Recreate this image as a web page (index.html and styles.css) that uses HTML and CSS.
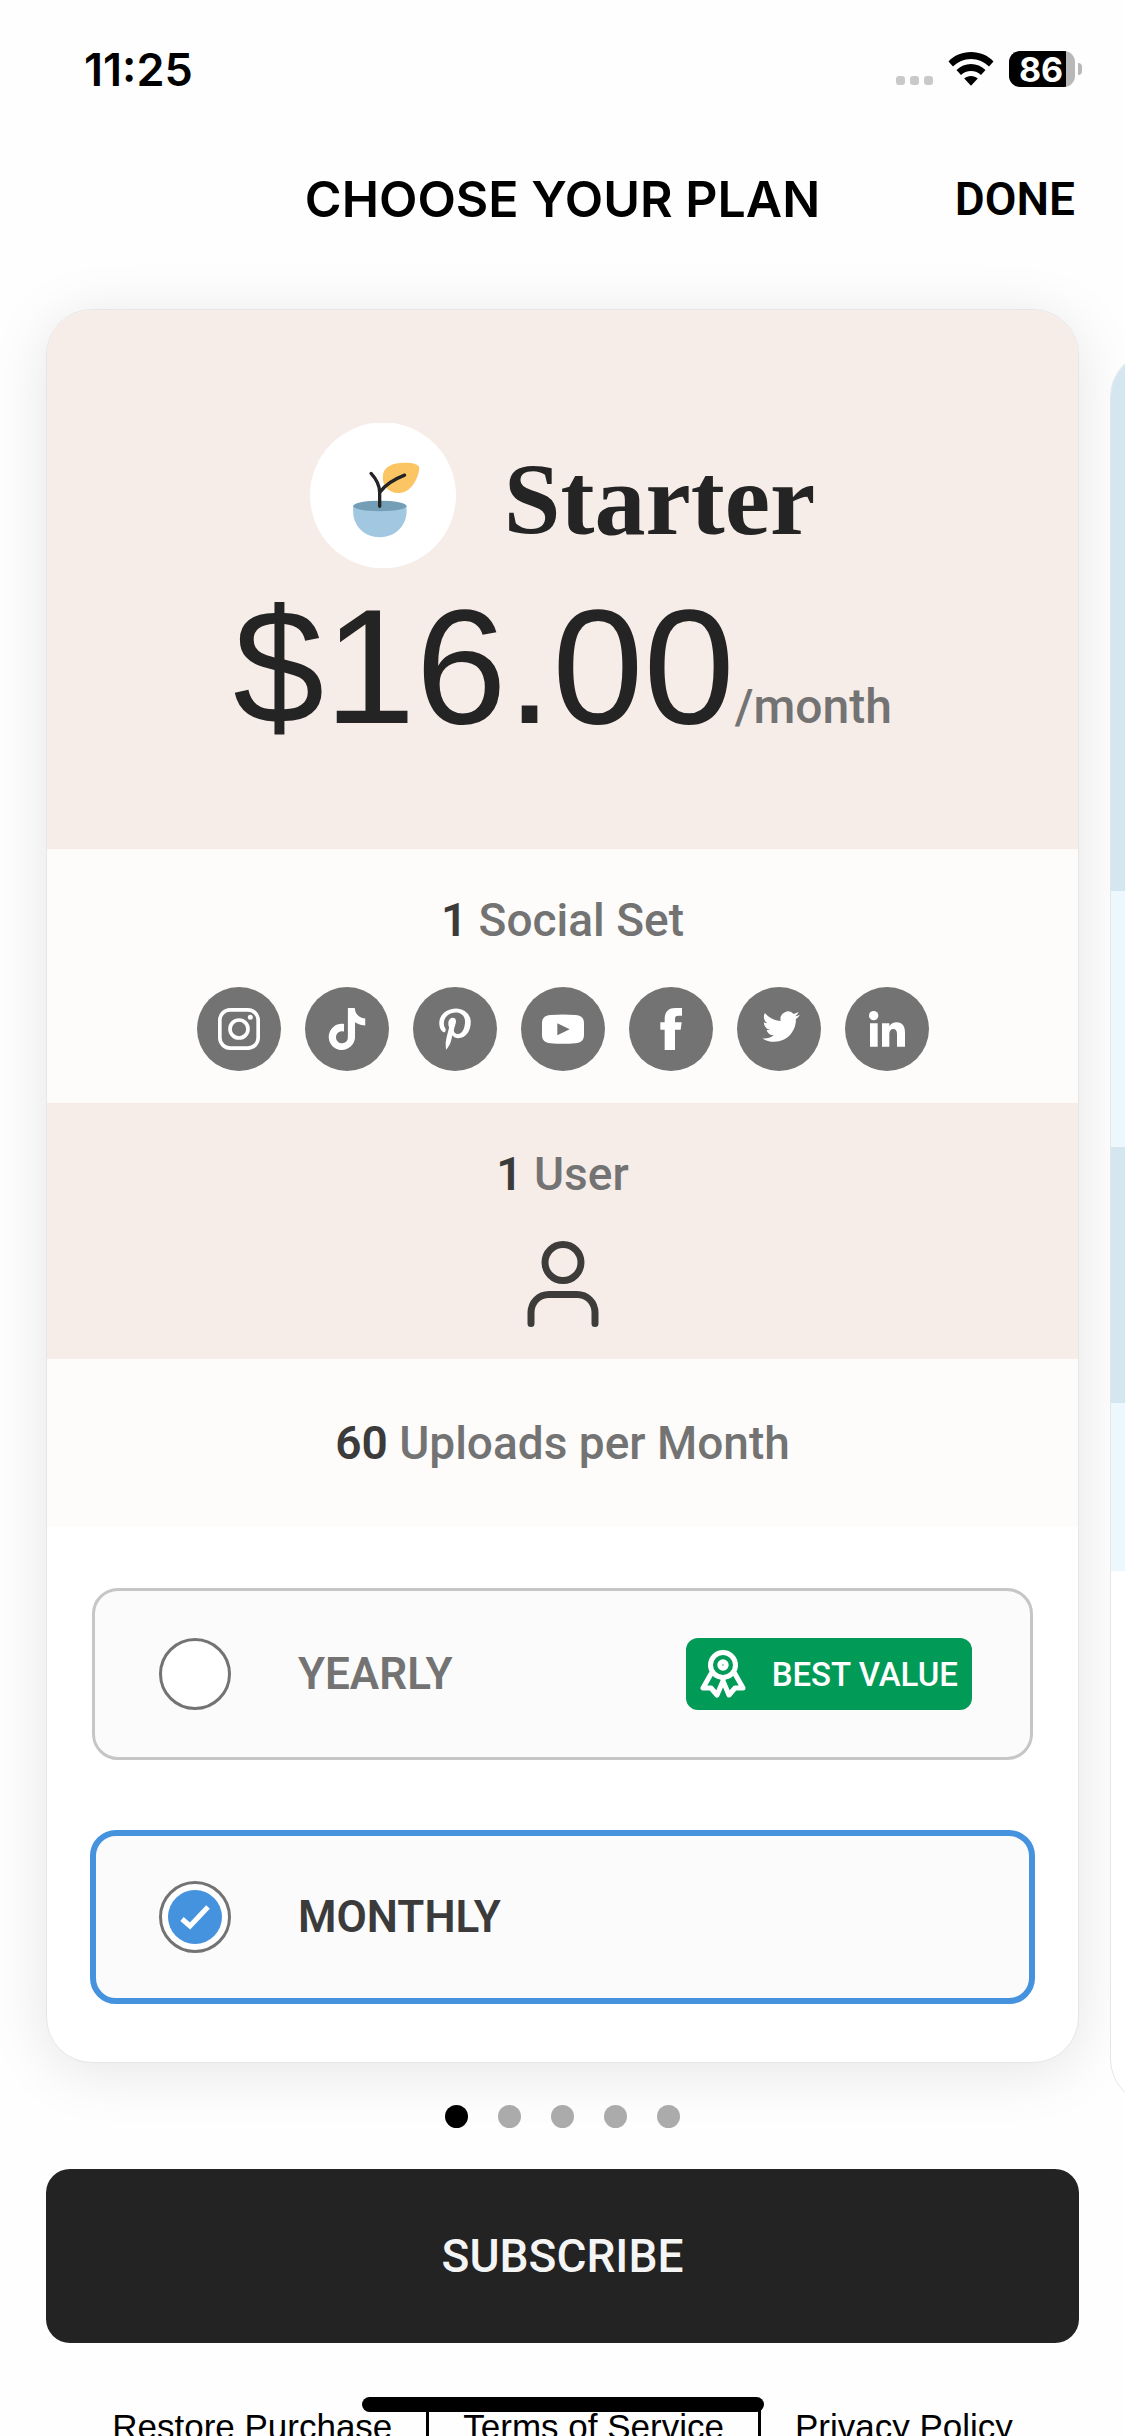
FILE: index.html
```html
<!DOCTYPE html>
<html lang="en">
<head>
  <meta charset="UTF-8">
  <meta name="viewport" content="width=device-width, initial-scale=1">
  <title>Choose Your Plan</title>
  <link rel="stylesheet" href="styles.css">
</head>
<body>

  <div class="status-bar">
    <div class="time">11:25</div>
    <div class="status-icons">
      <svg class="signal" width="37" height="9" viewBox="0 0 37 9">
        <rect width="9" height="9" rx="3"/>
        <rect x="14" width="9" height="9" rx="3"/>
        <rect x="28" width="9" height="9" rx="3"/>
      </svg>
      <svg class="wifi" width="46" height="34" viewBox="0 0 46 34">
        <path d="M23 0C32 0 40 3.500 45.500 9.500L41 14.500C36.500 10 30 7 23 7S9.500 10 5 14.500L.5 9.500C6 3.500 14 0 23 0Z"/>
        <path d="M23 12C28.500 12 33.500 14.300 37.500 18L33 23C30.300 20.500 27 19 23 19S15.700 20.500 13 23L8.500 18C12.500 14.300 17.500 12 23 12Z"/>
        <path d="M23 24C25.600 24 28 25 29.800 26.500L23 33.800L16.200 26.500C18 25 20.400 24 23 24Z"/>
      </svg>
      <div class="battery">
        <div class="battery-level">86</div>
      </div>
    </div>
  </div>

  <header class="nav">
    <h1>CHOOSE YOUR PLAN</h1>
    <button class="done">DONE</button>
  </header>

  <main>
    <div class="carousel">
      <section class="card">
        <div class="card-head tint">
          <div class="plan">
            <svg class="plan-icon" width="146" height="146" viewBox="28 40 440 440">
              <circle cx="248" cy="258" r="220" fill="#fff"/>
              <path d="M248 195C252 168 286 157 322 160C350 162 360 168 357 182C352 210 333 250 297 251C262 252 243 225 248 195Z" fill="#fbc564"/>
              <path d="M158 290H319V306C319 351 284 384 238 384S158 351 158 306Z" fill="#a2c8e1"/>
              <ellipse cx="238.500" cy="290" rx="80.500" ry="16" fill="#739eb5"/>
              <path d="M212 192Q238 220 238 250V291M240 247C258 222 285 208 313 197" fill="none" stroke="#242424" stroke-width="10" stroke-linecap="round"/>
            </svg>
            <h2>Starter</h2>
          </div>
          <div class="price">
            <span class="amount">$16.00</span><span class="period">/month</span>
          </div>
        </div>

        <div class="feature">
          <p><b>1</b> Social Set</p>
          <div class="socials">
            <span class="social">
              <svg viewBox="114 384 126 126">
                <g fill="none" stroke="#fff" stroke-width="11">
                  <rect x="119.500" y="389.500" width="115" height="115" rx="31"/>
                  <circle cx="177" cy="447" r="27"/>
                </g>
                <circle cx="211" cy="412" r="7.500"/>
              </svg>
            </span>
            <span class="social">
              <svg viewBox="0 0 24 24"><path d="M12.525.02c1.31-.02 2.61-.01 3.91-.02.08 1.530.63 3.090 1.750 4.170 1.120 1.110 2.700 1.620 4.240 1.790v4.030c-1.440-.05-2.890-.35-4.200-.97-.57-.26-1.100-.59-1.620-.93-.01 2.920.01 5.840-.02 8.750-.08 1.400-.54 2.790-1.350 3.940-1.310 1.920-3.580 3.170-5.910 3.210-1.430.08-2.860-.31-4.080-1.030-2.020-1.190-3.440-3.370-3.650-5.710-.02-.5-.03-1-.01-1.490.18-1.900 1.120-3.720 2.580-4.960 1.660-1.440 3.980-2.130 6.150-1.720.02 1.480-.04 2.960-.04 4.440-.99-.32-2.150-.23-3.020.37-.63.41-1.110 1.040-1.360 1.750-.21.51-.15 1.070-.14 1.610.24 1.640 1.820 3.020 3.500 2.870 1.120-.01 2.190-.66 2.770-1.610.19-.33.4-.67.41-1.060.1-1.790.06-3.570.07-5.360.01-4.030-.01-8.050.02-12.070z"/></svg>
            </span>
            <span class="social">
              <svg viewBox="-64 0 512 512"><path d="M204 6.500C101.400 6.500 0 74.900 0 185.600 0 256 39.600 296 63.600 296c9.900 0 15.600-27.600 15.600-35.400 0-9.300-23.700-29.100-23.700-67.800 0-80.400 61.200-137.400 140.400-137.400 68.100 0 118.500 38.700 118.500 109.800 0 53.100-21.300 152.700-90.300 152.700-24.900 0-46.200-18-46.200-43.800 0-37.800 26.400-74.400 26.400-113.400 0-66.200-93.900-54.200-93.900 25.800 0 16.800 2.100 35.400 9.600 50.700-13.800 59.400-42 147.900-42 209.100 0 18.900 2.700 37.500 4.500 56.400 3.400 3.800 1.700 3.400 6.900 1.500 50.400-69 48.600-82.500 71.400-172.800 12.300 23.400 44.100 36 69.300 36 106.200 0 153.900-103.500 153.900-196.800C384 71.300 298.200 6.500 204 6.500z"/></svg>
            </span>
            <span class="social">
              <svg viewBox="0 0 126 126"><path fill-rule="evenodd" d="M26 21Q63 18 100 21C118 22 126 30 126 46V80C126 96 118 104 100 106Q63 109 26 106C8 104 0 96 0 80V46C0 30 8 22 26 21ZM46 46V82L83 64Z"/></svg>
            </span>
            <span class="social">
              <svg viewBox="270 384 126 126"><path d="M314 510V449H301V427H314V417C314 394 327 384 345 384H366V407H354Q345 407 345 416V427H365L362 449H345V510Z"/></svg>
            </span>
            <span class="social">
              <svg viewBox="-2.8 0 27 27"><path d="M23.953 4.570a10 10 0 01-2.825.775 4.958 4.958 0 002.163-2.723c-.951.555-2.005.959-3.127 1.184a4.920 4.920 0 00-8.384 4.482C7.690 8.095 4.067 6.130 1.640 3.162a4.822 4.822 0 00-.666 2.475c0 1.710.87 3.213 2.188 4.096a4.904 4.904 0 01-2.228-.616v.06a4.923 4.923 0 003.946 4.827 4.996 4.996 0 01-2.212.085 4.936 4.936 0 004.604 3.417 9.867 9.867 0 01-6.102 2.105c-.39 0-.779-.023-1.170-.067a13.995 13.995 0 007.557 2.209c9.053 0 13.998-7.496 13.998-13.985 0-.21 0-.42-.015-.63A9.935 9.935 0 0024 4.590z"/></svg>
            </span>
            <span class="social">
              <svg viewBox="918 384 126 126">
                <circle cx="941" cy="407" r="14"/>
                <path d="M930 430h23v70h-23zM966 430h22v9c5-8 12-12 22-12 18 0 25 13 25 32v41h-24v-38c0-9-3-15-11-15s-12 6-12 15v38h-22z"/>
              </svg>
            </span>
          </div>
        </div>

        <div class="feature tint">
          <p><b>1</b> User</p>
          <svg class="user-icon" width="72" height="86" viewBox="0 0 72 86">
            <circle cx="36" cy="21.500" r="18"/>
            <path d="M4 82.500V72C4 61 12 53.500 22 53.500H50C60 53.500 68 61 68 72V82.500"/>
          </svg>
        </div>

        <div class="feature feature-last">
          <p><b>60</b> Uploads per Month</p>
        </div>

        <div class="options">
          <label class="option">
            <span class="radio">
              <input type="radio" name="billing" value="yearly">
              <svg class="check" viewBox="0 0 54 54"><path d="M14 29L22 36L40 17"/></svg>
            </span>
            <span class="option-name">YEARLY</span>
            <span class="badge">
              <svg width="46" height="48" viewBox="0 0 46 48">
                <circle cx="23" cy="15" r="12.500"/>
                <circle cx="23" cy="15" r="3.200"/>
                <path d="M11.500 23L3 38H11L17 45L23 31L29 45L35 38H43L34.500 23M23 28V32"/>
              </svg>
              BEST VALUE
            </span>
          </label>

          <label class="option selected">
            <span class="radio">
              <input type="radio" name="billing" value="monthly" checked>
              <svg class="check" viewBox="0 0 54 54"><path d="M14 29L22 36L40 17"/></svg>
            </span>
            <span class="option-name">MONTHLY</span>
          </label>
        </div>
      </section>

      <!-- next plan, only its left edge shows -->
      <section class="card card-next">
        <div class="next-head"></div>
        <div class="next-row"></div>
        <div class="next-row dark"></div>
        <div class="next-row short"></div>
      </section>
    </div>

    <div class="dots">
      <span class="dot active"></span>
      <span class="dot"></span>
      <span class="dot"></span>
      <span class="dot"></span>
      <span class="dot"></span>
    </div>

    <button class="subscribe">SUBSCRIBE</button>
  </main>

  <footer class="links">
    <a href="#">Restore Purchase</a>
    <a href="#">Terms of Service</a>
    <a href="#">Privacy Policy</a>
  </footer>

  <div class="home-bar"></div>

  <script>
    document.querySelectorAll('.option input').forEach(input => {
      input.addEventListener('change', () => {
        document.querySelectorAll('.option').forEach(option => {
          option.classList.toggle('selected', option.contains(input));
        });
      });
    });
  </script>

</body>
</html>
```
FILE: styles.css
```css
* {
  box-sizing: border-box;
}

html {
  height: 100%;
}

body {
  margin: 0;
  height: 100%;
  overflow: hidden;
  background: #fefefe;
  color: #000;
  font-family: Roboto, "Liberation Sans", sans-serif;
}

h1, h2, p {
  margin: 0;
}

button {
  border: none;
  cursor: pointer;
  font-family: inherit;
}

.status-bar {
  display: flex;
  justify-content: space-between;
  align-items: center;
  height: 138px;
  padding: 0 43px 0 84px;
  font-family: Inter, sans-serif;
  font-weight: 600;
}

.time {
  font-size: 45px;
}

.status-icons {
  display: flex;
  align-items: center;
  gap: 15px;
}

.signal {
  align-self: flex-end;
  margin-bottom: 2px;
  fill: #c9c9c9;
}

.battery {
  display: flex;
  align-items: center;
  position: relative;
  width: 66px;
  height: 36px;
  margin-right: 7px;
  border-radius: 11px;
  background: linear-gradient(to right, #000 86%, #b8b8b8 86%);
}

.battery::after {
  content: "";
  position: absolute;
  left: 69px;
  width: 4px;
  height: 12px;
  border-radius: 0 6px 6px 0;
  background: #b8b8b8;
}

.battery-level {
  width: 64px;
  color: #fff;
  font-size: 34px;
  font-weight: 700;
  text-align: center;
}

.nav {
  display: grid;
  grid-template-columns: 1fr auto 1fr;
  align-items: center;
  height: 122px;
  padding: 0 50px;
}

.nav h1 {
  grid-column: 2;
  font-family: Inter, sans-serif;
  font-size: 50px;
  font-weight: 600;
}

.done {
  justify-self: end;
  padding: 0;
  background: none;
  color: #000;
  font-size: 46px;
  font-weight: 600;
}

main {
  padding: 49px 46px 0;
}

.carousel {
  display: flex;
  gap: 31px;
}

.card {
  flex: 0 0 100%;
  overflow: hidden;
  border: 1px solid #e6e6e6;
  border-radius: 46px;
  background: #fff;
  box-shadow: 0 8px 60px rgba(0, 0, 0, 0.1);
}

.tint {
  background: #f6ece8;
}

.card-head {
  padding: 113px 0 62px;
  color: #242424;
}

.plan {
  display: flex;
  justify-content: center;
  align-items: center;
  gap: 48px;
}

.plan h2 {
  padding-top: 8px;
  font-family: "Liberation Serif", serif;
  font-size: 102px;
  font-weight: 700;
  line-height: 138px;
}

.price {
  display: flex;
  justify-content: center;
  align-items: baseline;
  margin-top: 18px;
  line-height: 160px;
}

.amount {
  font-family: "Liberation Sans", sans-serif;
  font-size: 164px;
}

.period {
  color: #737373;
  font-size: 48px;
  font-weight: 500;
}

.feature {
  display: flex;
  flex-direction: column;
  align-items: center;
  gap: 40px;
  padding: 44px 0 32px;
  color: #737373;
  font-size: 46px;
  font-weight: 500;
  line-height: 54px;
}

.feature:not(.tint) {
  background: #fdfcfa;
}

.feature-last {
  padding: 57px 0;
}

.feature b {
  color: #3b3b3b;
  font-weight: 600;
}

.socials {
  display: flex;
  gap: 24px;
}

.social {
  display: flex;
  justify-content: center;
  align-items: center;
  width: 84px;
  height: 84px;
  border-radius: 50%;
  background: #737373;
}

.social svg {
  width: 42px;
  height: 42px;
  fill: #fff;
}

.user-icon {
  fill: none;
  stroke: #3d3c3b;
  stroke-width: 7;
  stroke-linecap: round;
}

.options {
  display: flex;
  flex-direction: column;
  gap: 70px;
  padding: 61px 45px 58px;
}

.option {
  display: flex;
  align-items: center;
  padding: 47px 58px 47px 64px;
  border: 3px solid #c6c6c6;
  border-radius: 26px;
  background: #fbfbfb;
  color: #737373;
  font-size: 44px;
  font-weight: 600;
  cursor: pointer;
}

.option.selected {
  margin: 0 -2px;
  padding: 45px 57px 45px 63px;
  border: 6px solid #4592de;
  color: #3b3b3b;
}

.radio {
  display: grid;
  place-items: center;
  margin-right: 67px;
}

.radio input,
.check {
  grid-area: 1 / 1;
}

.radio input {
  appearance: none;
  width: 72px;
  height: 72px;
  margin: 0;
  border: 3px solid #737373;
  border-radius: 50%;
  background: #fff;
}

.check {
  display: none;
  width: 54px;
  height: 54px;
  border-radius: 50%;
  background: #4592de;
  fill: none;
  stroke: #fff;
  stroke-width: 5;
  pointer-events: none;
}

.radio input:checked + .check {
  display: block;
}

.badge {
  display: flex;
  align-items: center;
  gap: 26px;
  height: 72px;
  margin-left: auto;
  padding: 0 14px;
  border-radius: 12px;
  background: #029a57;
  color: #fff;
  font-size: 33px;
  font-weight: 500;
}

.badge svg {
  fill: none;
  stroke: #fff;
  stroke-width: 5;
  stroke-linejoin: round;
}

.card-next {
  margin: 42px 0 -42px;
  box-shadow: none;
}

.next-head {
  height: 539px;
  background: #d4e6ef;
}

.next-row {
  height: 256px;
  background: #edf8fe;
}

.next-row.dark {
  background: #d4e6ef;
}

.next-row.short {
  height: 168px;
}

.dots {
  display: flex;
  justify-content: center;
  gap: 30px;
  padding: 42px 0 41px;
}

.dot {
  width: 23px;
  height: 23px;
  border-radius: 50%;
  background: #ababab;
}

.dot.active {
  background: #000;
}

.subscribe {
  display: block;
  width: 100%;
  height: 174px;
  border-radius: 24px;
  background: #232323;
  color: #f5f5f5;
  font-size: 46px;
  font-weight: 500;
}

.links {
  display: flex;
  justify-content: center;
  margin-top: 64px;
  font-family: "Liberation Sans", sans-serif;
  font-size: 35px;
  line-height: 40px;
}

.links a {
  padding: 0 34px;
  color: #000;
  text-decoration: none;
}

.links a + a {
  border-left: 3px solid #000;
}

.home-bar {
  position: fixed;
  bottom: 24px;
  left: 50%;
  width: 402px;
  height: 15px;
  margin-left: -201px;
  border-radius: 8px;
  background: #000;
}
```
